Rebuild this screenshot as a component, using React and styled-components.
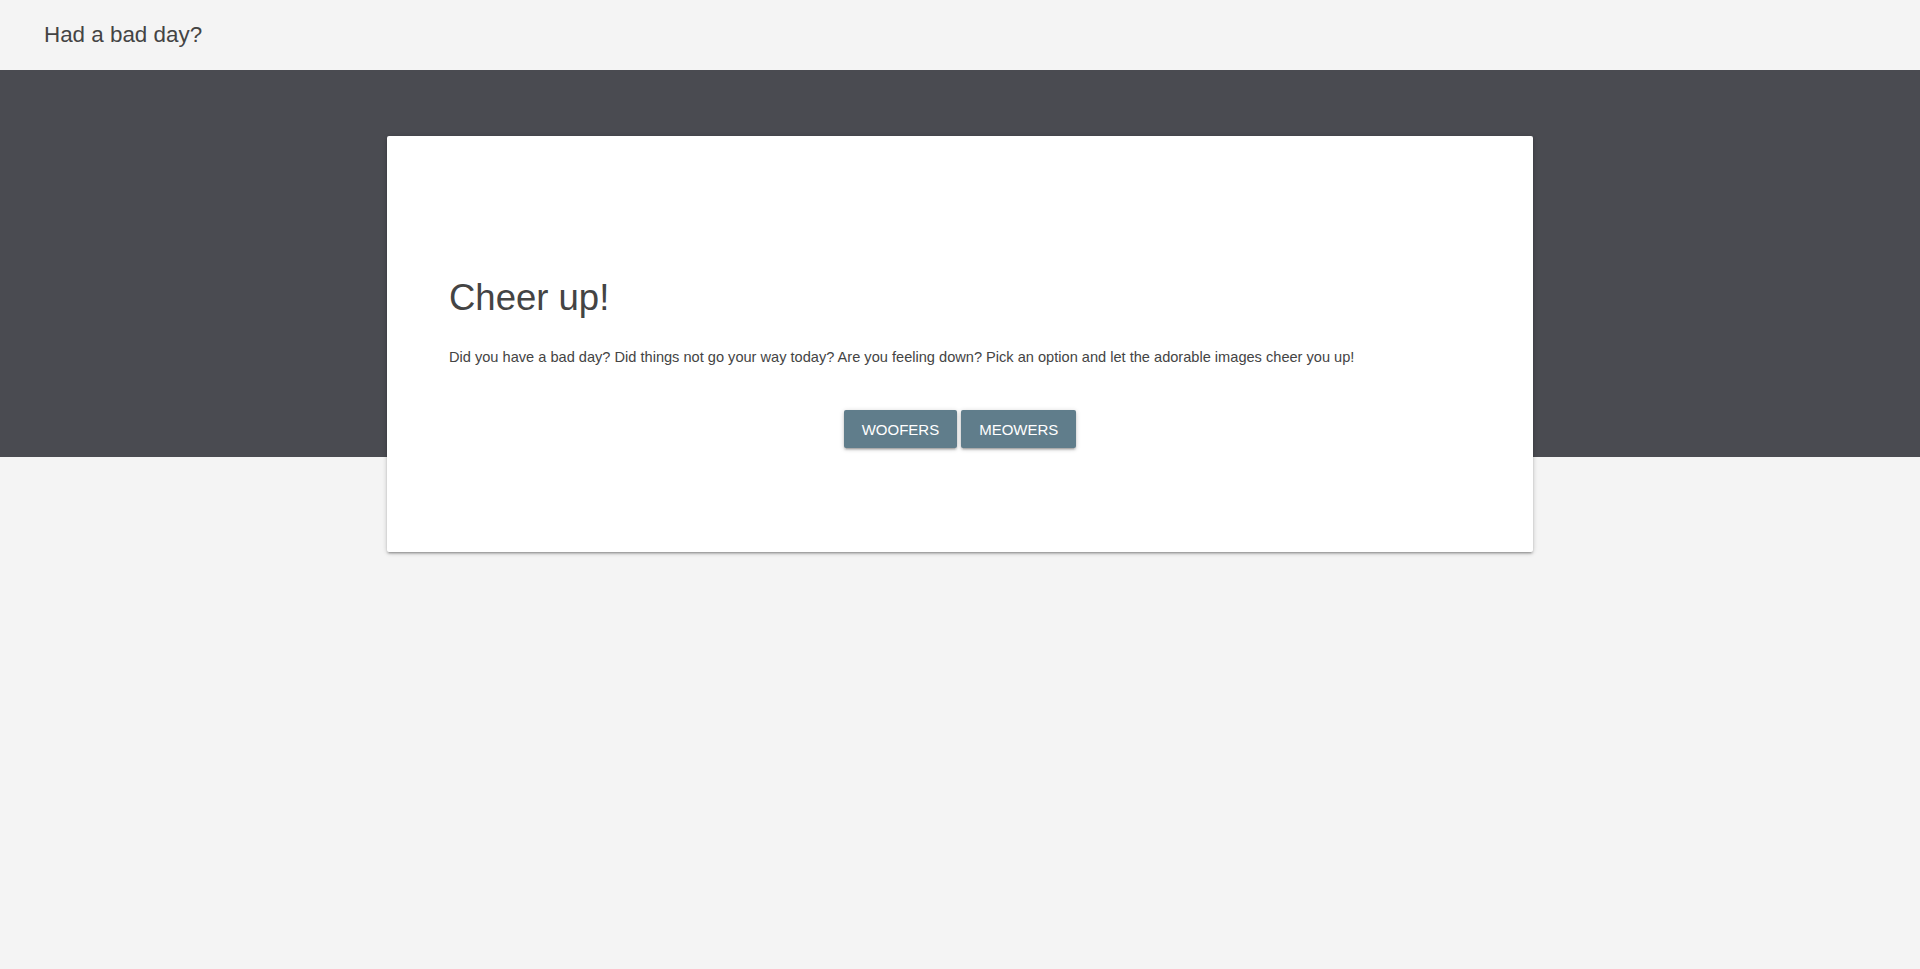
import React from "react";
import styled, { createGlobalStyle } from "styled-components";

const GlobalStyle = createGlobalStyle`
    html, body {
        margin: 0;
        padding: 0;
        background: #f4f4f4;
        font-family: "Liberation Sans", Arial, sans-serif;
        color: #444;
    }
`;

const TopBar = styled.header`
    height: 70px;
    display: flex;
    align-items: center;
    padding: 0 44px;
    background: #f4f4f4;
`;

const Brand = styled.span`
    font-size: 22.4px;
    color: #444;
`;

const Hero = styled.main`
    box-sizing: border-box;
    background: linear-gradient(#4a4b51 0, #4a4b51 387px, #f4f4f4 387px);
    padding-top: 66px;
    min-height: calc(100vh - 70px);
    display: flex;
    justify-content: center;
    align-items: flex-start;
`;

const Card = styled.section`
    width: 1146px;
    box-sizing: border-box;
    background: #fff;
    border-radius: 2px;
    padding: 142px 62px 104px;
    box-shadow: 0 2px 2px 0 rgba(0, 0, 0, 0.14), 0 3px 1px -2px rgba(0, 0, 0, 0.12),
        0 1px 5px 0 rgba(0, 0, 0, 0.2);
`;

const Title = styled.h1`
    margin: 0;
    font-size: 36.5px;
    font-weight: 400;
    line-height: 1.1;
    color: #444;
`;

const Blurb = styled.p`
    margin: 29px 0 43px;
    font-size: 14.6px;
    line-height: 20px;
    color: #444;
`;

const ButtonRow = styled.div`
    display: flex;
    justify-content: center;
    gap: 4px;
`;

const Button = styled.button`
    height: 38px;
    padding: 0 18px;
    border: none;
    border-radius: 2px;
    background: #607d8b;
    color: #fff;
    font-family: "Liberation Sans", Arial, sans-serif;
    font-size: 15px;
    text-transform: uppercase;
    cursor: pointer;
    box-shadow: 0 2px 2px 0 rgba(0, 0, 0, 0.14), 0 3px 1px -2px rgba(0, 0, 0, 0.12),
        0 1px 5px 0 rgba(0, 0, 0, 0.2);
`;

const App = () => {
    return (
        <>
            <GlobalStyle />
            <TopBar>
                <Brand>Had a bad day?</Brand>
            </TopBar>
            <Hero>
                <Card>
                    <Title>Cheer up!</Title>
                    <Blurb>
                        Did you have a bad day? Did things not go your way today? Are you feeling down? Pick an option and let the adorable images cheer you up!
                    </Blurb>
                    <ButtonRow>
                        <Button>Woofers</Button>
                        <Button>Meowers</Button>
                    </ButtonRow>
                </Card>
            </Hero>
        </>
    );
};

export default App;
